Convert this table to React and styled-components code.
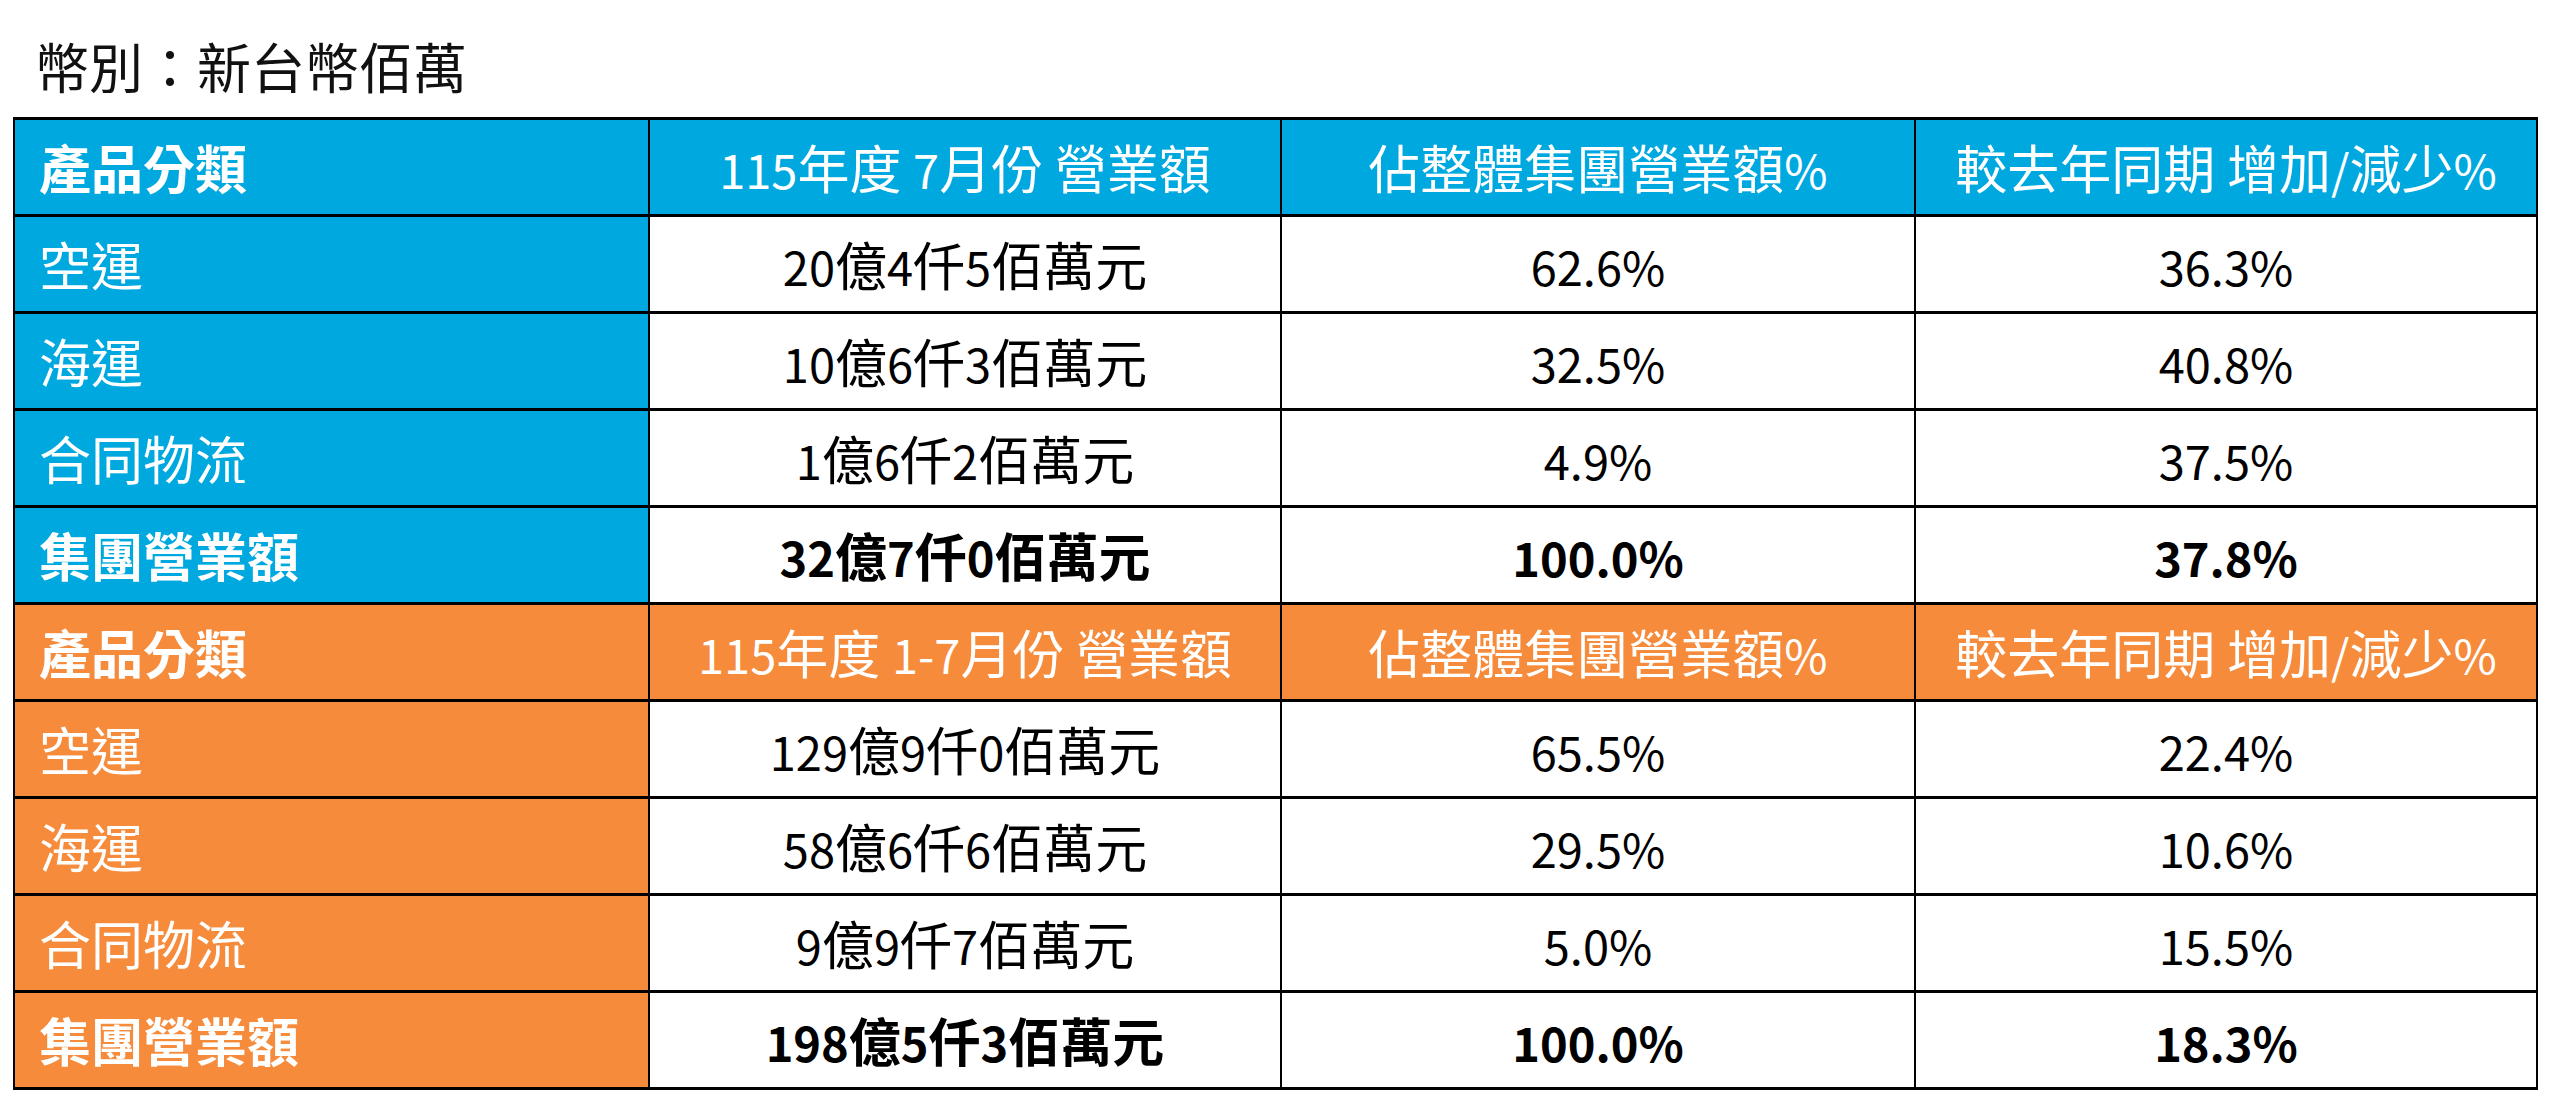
import styled, { createGlobalStyle } from "styled-components";

const GlobalStyle = createGlobalStyle`
  body {
    margin: 0;
    background: #fff;
    font-family: "Noto Sans CJK TC", "Noto Sans", sans-serif;
  }
`;

const Page = styled.div`
  width: 2560px;
  height: 1111px;
  padding: 0 24px 0 13px;
  box-sizing: border-box;
`;

const Title = styled.div`
  height: 117px;
  display: flex;
  align-items: center;
  padding-left: 22px;
  padding-top: 14px;
  box-sizing: border-box;
  font-size: 54px;
  color: #111;
`;

const Table = styled.table`
  width: 2523px;
  border-collapse: collapse;
  table-layout: fixed;
`;

const Cell = styled.td`
  height: 94px;
  padding: 0;
  border-top: 3px solid #000;
  border-bottom: 3px solid #000;
  border-left: 2px solid #000;
  border-right: 2px solid #000;
  font-size: 52px;
  line-height: 1;
  text-align: center;
  color: #000;
  font-weight: ${(p) => (p.bold ? 700 : 400)};
  background: #fff;
  white-space: nowrap;
`;

const Head = styled(Cell)`
  background: ${(p) => p.bg};
  color: #fff;
`;

const Label = styled(Cell)`
  background: ${(p) => p.bg};
  color: #fff;
  text-align: left;
  padding-left: 24px;
`;

// latin digits in the original are narrower than the CJK glyphs
const Num = styled.span`
  font-size: 47px;
`;

const BLUE = "#00a8e0";
const ORANGE = "#f58b3b";

function Txt({ children }) {
  const parts = children.split(/([0-9.%\/\-]+)/);
  return parts.map((p, i) =>
    /^[0-9.%\/\-]+$/.test(p) ? <Num key={i}>{p}</Num> : p
  );
}

const sections = [
  {
    bg: BLUE,
    period: "115年度 7月份 營業額",
    rows: [
      ["空運", "20億4仟5佰萬元", "62.6%", "36.3%"],
      ["海運", "10億6仟3佰萬元", "32.5%", "40.8%"],
      ["合同物流", "1億6仟2佰萬元", "4.9%", "37.5%"],
    ],
    total: ["集團營業額", "32億7仟0佰萬元", "100.0%", "37.8%"],
  },
  {
    bg: ORANGE,
    period: "115年度 1-7月份 營業額",
    rows: [
      ["空運", "129億9仟0佰萬元", "65.5%", "22.4%"],
      ["海運", "58億6仟6佰萬元", "29.5%", "10.6%"],
      ["合同物流", "9億9仟7佰萬元", "5.0%", "15.5%"],
    ],
    total: ["集團營業額", "198億5仟3佰萬元", "100.0%", "18.3%"],
  },
];

function Section({ s }) {
  return (
    <>
      <tr>
        <Label as="th" bg={s.bg} bold>
          產品分類
        </Label>
        <Head as="th" bg={s.bg}><Txt>{s.period}</Txt></Head>
        <Head as="th" bg={s.bg}><Txt>佔整體集團營業額%</Txt></Head>
        <Head as="th" bg={s.bg}><Txt>較去年同期 增加/減少%</Txt></Head>
      </tr>
      {s.rows.map((r) => (
        <tr key={r[0]}>
          <Label bg={s.bg}>{r[0]}</Label>
          <Cell><Txt>{r[1]}</Txt></Cell>
          <Cell><Txt>{r[2]}</Txt></Cell>
          <Cell><Txt>{r[3]}</Txt></Cell>
        </tr>
      ))}
      <tr>
        <Label bg={s.bg} bold>
          {s.total[0]}
        </Label>
        <Cell bold><Txt>{s.total[1]}</Txt></Cell>
        <Cell bold><Txt>{s.total[2]}</Txt></Cell>
        <Cell bold><Txt>{s.total[3]}</Txt></Cell>
      </tr>
    </>
  );
}

function App() {
  return (
    <Page>
      <GlobalStyle />
      <Title>幣別：新台幣佰萬</Title>
      <Table>
        <colgroup>
          <col style={{ width: 635 }} />
          <col style={{ width: 632 }} />
          <col style={{ width: 634 }} />
          <col style={{ width: 622 }} />
        </colgroup>
        <tbody>
          {sections.map((s) => (
            <Section key={s.period} s={s} />
          ))}
        </tbody>
      </Table>
    </Page>
  );
}

export default App;
